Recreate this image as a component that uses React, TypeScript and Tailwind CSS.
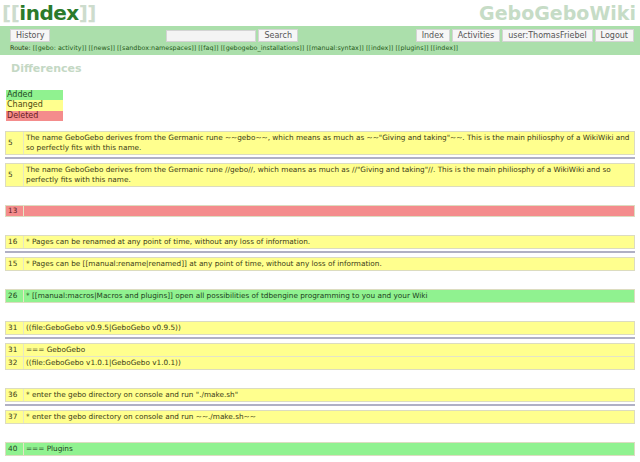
import React from 'react';

type Kind = 'added' | 'changed' | 'deleted';

interface Line {
  n: string;
  text: React.ReactNode;
}

const rowColors: Record<Kind, string> = {
  added: 'bg-[#90f290] text-[#1d3f1d]',
  changed: 'bg-[#ffff8e] text-[#3b3b16]',
  deleted: 'bg-[#f48c8c] text-[#5a1c1c]',
};

function Row({ kind, line }: { kind: Kind; line: Line }) {
  return (
    <div className={`flex border-t border-[#e4e4c8] first:border-t-0 ${rowColors[kind]}`}>
      <div className="w-[18px] shrink-0 flex items-center pl-[2px] border-r border-[#e6e6c4]">{line.n}</div>
      <div className="pl-[2px] py-px whitespace-nowrap">{line.text}</div>
    </div>
  );
}

function Block({ kind, lines, after }: { kind: Kind; lines: Line[]; after?: Line[] }) {
  return (
    <div className="mt-[18px] first:mt-0">
      <div className="border border-[#dcdcc0]">
        {lines.map((l, i) => (
          <Row key={i} kind={kind} line={l} />
        ))}
      </div>
      {after && (
        <>
          <div className="h-[8px] pt-[2px]">
            <div className="h-[2px] bg-[#b0b0c4]" />
          </div>
          <div className="border border-[#dcdcc0]">
            {after.map((l, i) => (
              <Row key={i} kind={kind} line={l} />
            ))}
          </div>
        </>
      )}
    </div>
  );
}

function Btn({ children }: { children: React.ReactNode }) {
  return (
    <div className="h-[13px] px-[5px] flex items-center bg-[#f6f6f6] border border-[#d4d4d4] text-[#555] text-[8px] leading-none">
      {children}
    </div>
  );
}

const routeLinks = [
  'gebo: activity',
  'news',
  'sandbox:namespaces',
  'faq',
  'gebogebo_installations',
  'manual:syntax',
  'index',
  'plugins',
  'index',
];

export default function App() {
  return (
    <div className="w-[640px] h-[462px] overflow-hidden bg-white" style={{ fontFamily: '"DejaVu Sans", Verdana, sans-serif' }}>
      {/* title */}
      <div className="h-[26px] flex items-center justify-between pl-[2px] pr-[4px]">
        <div className="text-[20px] font-bold leading-none tracking-tight">
          <span className="text-[#cddccd]">[[</span>
          <span className="text-[#2b7a2b]">index</span>
          <span className="text-[#cddccd]">]]</span>
        </div>
        <div className="text-[19px] font-bold leading-none text-[#c6dcc6]">GeboGeboWiki</div>
      </div>

      {/* nav bar */}
      <div className="h-[29px] bg-[#abdfab] pt-[3px] px-[6px]">
        <div className="flex items-center h-[13px]">
          <div className="ml-[4px]">
            <Btn>History</Btn>
          </div>
          <div className="ml-[116px] w-[90px] h-[12px] bg-[#f4f4f4] border border-[#d4d4d4]" />
          <div className="ml-[2px]">
            <Btn>Search</Btn>
          </div>
          <div className="ml-auto flex gap-[2px]">
            <Btn>Index</Btn>
            <Btn>Activities</Btn>
            <Btn>user:ThomasFriebel</Btn>
            <Btn>Logout</Btn>
          </div>
        </div>
        <div className="mt-[2px] ml-[4px] text-[6.4px] leading-[9px] text-[#245a18] whitespace-nowrap">
          <span className="text-[#2a3a10]">Route: </span>
          {routeLinks.map((r, i) => (
            <span key={i}>[[{r}]] </span>
          ))}
        </div>
      </div>

      {/* heading */}
      <div className="pl-[11px] pt-[7px] text-[11px] font-bold leading-[13px] text-[#c4d8c4]">Differences</div>

      {/* legend */}
      <div className="mt-[15px] ml-[6px] w-[57px] text-[8px] leading-[10.4px]">
        <div className="bg-[#90f290] text-[#1d4a1d] pl-px">Added</div>
        <div className="bg-[#ffff8e] text-[#4a4a10] pl-px">Changed</div>
        <div className="bg-[#f48c8c] text-[#6a1c1c] pl-px">Deleted</div>
      </div>

      {/* diff */}
      <div className="mt-[10px] mx-[5px] text-[7.3px] leading-[10px]">
        <Block
          kind="changed"
          lines={[
            {
              n: '5',
              text: (
                <>
                  The name GeboGebo derives from the Germanic rune ~~gebo~~, which means as much as ~~"Giving and taking"~~. This is the main philiosphy of a WikiWiki and
                  <br />
                  so perfectly fits with this name.
                </>
              ),
            },
          ]}
          after={[
            {
              n: '5',
              text: (
                <>
                  The name GeboGebo derives from the Germanic rune //gebo//, which means as much as //"Giving and taking"//. This is the main philiosphy of a WikiWiki and so
                  <br />
                  perfectly fits with this name.
                </>
              ),
            },
          ]}
        />
        <Block kind="deleted" lines={[{ n: '13', text: '' }]} />
        <Block
          kind="changed"
          lines={[{ n: '16', text: '* Pages can be renamed at any point of time, without any loss of information.' }]}
          after={[{ n: '15', text: '* Pages can be [[manual:rename|renamed]] at any point of time, without any loss of information.' }]}
        />
        <Block
          kind="added"
          lines={[{ n: '26', text: '* [[manual:macros|Macros and plugins]]  open all possibilities of tdbengine programming to you and your Wiki' }]}
        />
        <Block
          kind="changed"
          lines={[{ n: '31', text: '((file:GeboGebo v0.9.5|GeboGebo v0.9.5))' }]}
          after={[
            { n: '31', text: '=== GeboGebo' },
            { n: '32', text: '((file:GeboGebo v1.0.1|GeboGebo v1.0.1))' },
          ]}
        />
        <Block
          kind="changed"
          lines={[{ n: '36', text: '* enter the gebo directory on console and run "./make.sh"' }]}
          after={[{ n: '37', text: '* enter the gebo directory on console and run ~~./make.sh~~' }]}
        />
        <Block kind="added" lines={[{ n: '40', text: '=== Plugins' }]} />
      </div>
    </div>
  );
}
